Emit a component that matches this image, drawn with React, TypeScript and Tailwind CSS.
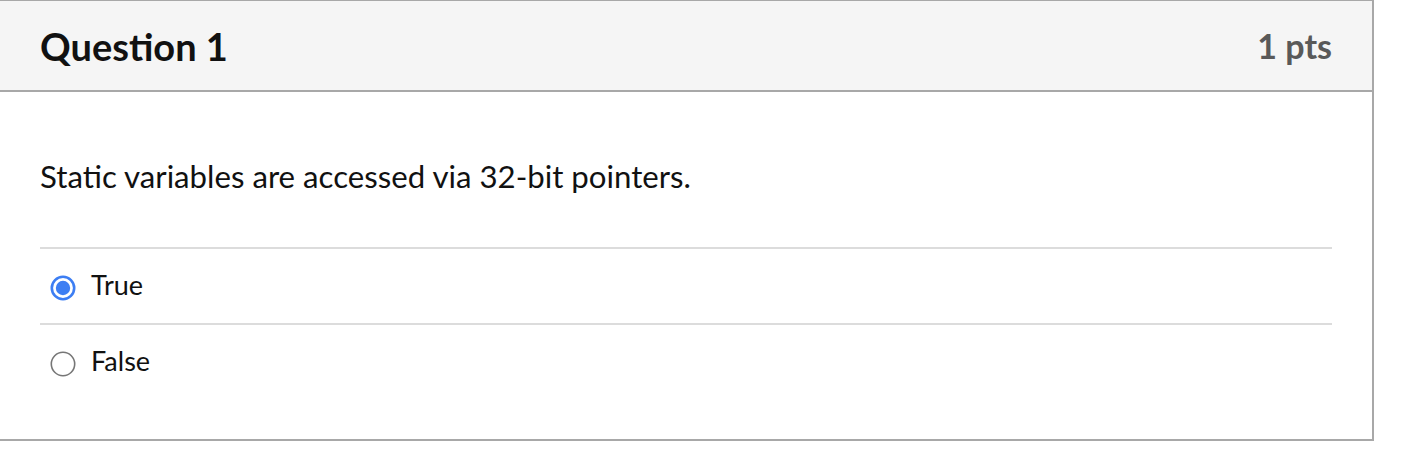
import React from 'react';

const answers = [
  { id: 'true', label: 'True', checked: true },
  { id: 'false', label: 'False', checked: false },
];

const Radio: React.FC<{ checked: boolean }> = ({ checked }) =>
  checked ? (
    <svg width="26" height="26" viewBox="0 0 26 26" className="shrink-0">
      <circle cx="13" cy="13" r="11.2" fill="white" stroke="#3d7ef3" strokeWidth="2.6" />
      <circle cx="13" cy="13" r="7.2" fill="#3d7ef3" />
    </svg>
  ) : (
    <svg width="26" height="26" viewBox="0 0 26 26" className="shrink-0">
      <circle cx="13" cy="13" r="11.7" fill="white" stroke="#767676" strokeWidth="1.6" />
    </svg>
  );

export default function App() {
  return (
    <div className="w-[1402px] h-[450px] bg-white" style={{ fontFamily: 'Lato, "Open Sans", sans-serif' }}>
      <div className="w-[1374px] border-t border-r-2 border-b-2 border-[#a8a8a8]">
        {/* header */}
        <div className="h-[91px] flex items-center justify-between px-10 bg-[#f5f5f5] border-b-2 border-[#a8a8a8]">
          <h2 className="text-[38px] font-bold text-[#111] leading-none">Question 1</h2>
          <span className="text-[34px] font-bold text-[#595959] leading-none">1 pts</span>
        </div>

        {/* body */}
        <div className="px-10 pt-[63px] pb-[40px]">
          <p className="text-[31.2px] leading-[42px] text-[#111]">
            Static variables are accessed via 32-bit pointers.
          </p>
          <div className="mt-[50px]">
            {answers.map((a) => (
              <label
                key={a.id}
                className="h-[76px] flex items-center gap-[15px] pl-[10px] pt-[4px] border-t-2 border-[#dcdcdc]"
              >
                <Radio checked={a.checked} />
                <span className="text-[27px] text-[#111] -mt-[6px]">{a.label}</span>
              </label>
            ))}
          </div>
        </div>
      </div>
    </div>
  );
}
